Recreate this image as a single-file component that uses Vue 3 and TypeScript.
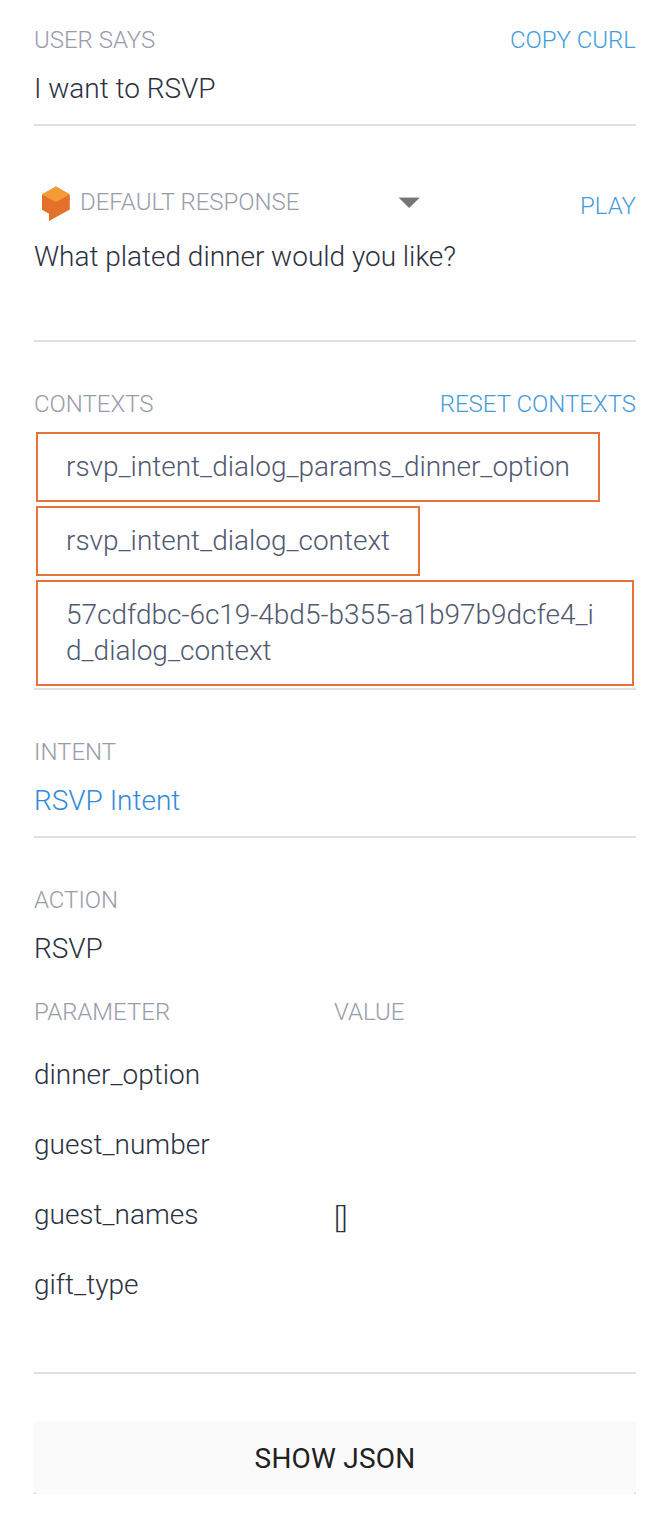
<script setup lang="ts">
const contexts: string[] = [
  'rsvp_intent_dialog_params_dinner_option',
  'rsvp_intent_dialog_context',
  '57cdfdbc-6c19-4bd5-b355-a1b97b9dcfe4_id_dialog_context',
]
const params: { name: string; value: string }[] = [
  { name: 'dinner_option', value: '' },
  { name: 'guest_number', value: '' },
  { name: 'guest_names', value: '[]' },
  { name: 'gift_type', value: '' },
]
</script>

<template>
  <main class="panel">
    <section class="says">
      <div class="head"><span class="label">USER SAYS</span><a class="link">COPY CURL</a></div>
      <div class="text">I want to RSVP</div>
    </section>
    <section class="response">
      <div class="head">
        <svg class="logo" width="30" height="36" viewBox="0 0 30 36">
          <path d="M14.9.5 28.8 8.4v15.1L8 35v-7.2l-7-4V8.4z" fill="#e2722b" />
          <path d="M14.9.5 28.8 8.4 14.9 15.9 1 8.4z" fill="#f49b36" />
        </svg>
        <span class="label">DEFAULT RESPONSE</span>
        <svg class="caret" width="22" height="11" viewBox="0 0 22 11">
          <path d="M.7 0h21v1H.7z" fill="#c4c4c4" />
          <path d="M1 1h20.4L11.2 11z" fill="#757575" />
        </svg>
        <a class="link play">PLAY</a>
      </div>
      <div class="text">What plated dinner would you like?</div>
    </section>
    <section class="contexts">
      <div class="head"><span class="label">CONTEXTS</span><a class="link">RESET CONTEXTS</a></div>
      <div class="chips">
        <div v-for="c in contexts" :key="c" class="chip">{{ c }}</div>
      </div>
    </section>
    <section class="intent">
      <div class="head"><span class="label">INTENT</span></div>
      <div class="text blue">RSVP Intent</div>
    </section>
    <section class="action">
      <div class="head"><span class="label">ACTION</span></div>
      <div class="text">RSVP</div>
      <div class="row header"><span class="label">PARAMETER</span><span class="label">VALUE</span></div>
      <div v-for="p in params" :key="p.name" class="row"><span>{{ p.name }}</span><span class="value">{{ p.value }}</span></div>
    </section>
    <div class="footer"><button class="json">SHOW JSON</button></div>
  </main>
</template>

<style>
body { background: #fefefe; }
</style>
<style scoped>
.panel {
  box-sizing: border-box;
  height: 1514px;
  padding: 0 34px;
  font: 300 28px/36px Roboto, sans-serif;
  letter-spacing: -0.015px;
  color: #2b3040;
}
section { box-sizing: border-box; border-bottom: 2px solid #e0e0e0; }
.head { display: flex; justify-content: space-between; height: 32px; line-height: 32px; }
.label { font-size: 24px; color: #989ca9; }
.link { font-size: 24px; letter-spacing: 0; color: #459bdd; }
.says { height: 126px; padding-top: 24px; }
.text { margin-top: 15px; }
.response { height: 216px; padding-top: 60px; }
.response .head { justify-content: flex-start; }
.logo { margin: 0 9px 0 7px; flex: none; }
.caret { margin: 11px 0 0 99px; }
.play { margin: 4px 0 0 auto; }
.response .text { margin-top: 21px; }
.contexts { height: 348px; padding-top: 46px; }
.chips { display: flex; flex-direction: column; align-items: flex-start; gap: 4px; padding: 12px 2px 0; }
.chip {
  box-sizing: border-box;
  max-width: 100%;
  padding: 15px 28px;
  border: 2px solid #e5733a;
  color: #505970;
  letter-spacing: -0.02px;
  word-break: break-all;
}
.intent { height: 148px; padding-top: 46px; }
.blue { color: #318ad8; }
.action { height: 536px; padding-top: 46px; }
.row { display: grid; grid-template-columns: 300px 1fr; height: 70px; line-height: 70px; }
.value { padding-top: 4px; }
.header { height: 60px; margin-top: 13px; }
.header .label { line-height: 64px; }
.footer { margin-top: 48px; background: linear-gradient(#fafafa 50%, #d8d8d8 50%); }
.json {
  display: block;
  width: 100%;
  height: 72px;
  padding: 2px 0 0;
  border: 0;
  border-radius: 0 0 4px 4px;
  background: #fafafa;
  color: #212121;
  font: 400 28px/70px Roboto, sans-serif;
  letter-spacing: 0.2px;
}
</style>
